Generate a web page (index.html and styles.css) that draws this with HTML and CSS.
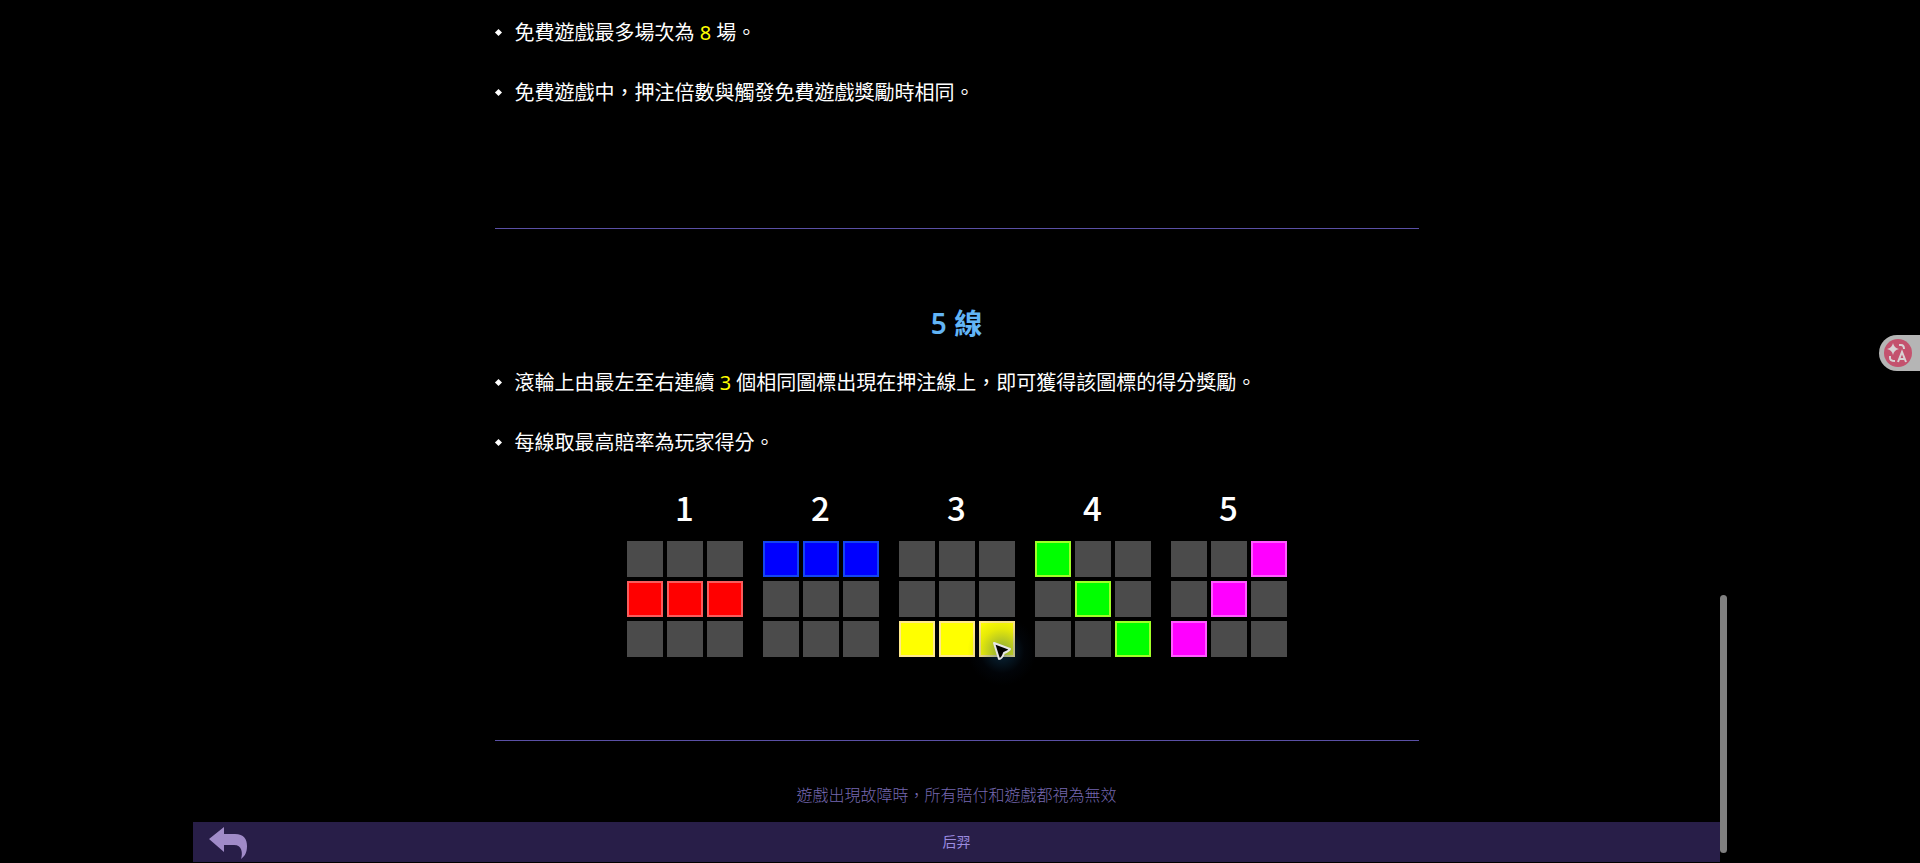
FILE: index.html
```html
<!DOCTYPE html>
<html lang="zh-TW">
<head>
  <meta charset="UTF-8">
  <title>后羿</title>
  <link rel="stylesheet" href="styles.css">
</head>
<body>

  <div class="game">
    <main class="help">
      <section>
        <ul class="rules">
          <li>免費遊戲最多場次為 <span class="num">8</span> 場。</li>
          <li>免費遊戲中，押注倍數與觸發免費遊戲獎勵時相同。</li>
        </ul>
      </section>

      <section class="lines-section">
        <h2>5 線</h2>
        <ul class="rules">
          <li>滾輪上由最左至右連續 <span class="num">3</span> 個相同圖標出現在押注線上，即可獲得該圖標的得分獎勵。</li>
          <li>每線取最高賠率為玩家得分。</li>
        </ul>
        <div class="lines" id="lines"></div>
      </section>

      <p class="notice">遊戲出現故障時，所有賠付和遊戲都視為無效</p>
    </main>

    <footer class="bar">
      <button class="back" aria-label="返回">
        <svg width="40" height="34" viewBox="0 0 40 34">
          <path d="M1 13 L16 1 V8 H27 C36 8 39 13 39 20 C39 26 37 30 33 33 C35 27 34 19 26 19 H16 V26 Z" fill="#a08bc8"/>
        </svg>
      </button>
      <span>后羿</span>
    </footer>

    <div class="scroll-thumb"></div>
  </div>

  <button class="translate" aria-label="翻譯">
    <svg width="28" height="28" viewBox="0 0 28 28">
      <circle cx="14" cy="14" r="14" fill="#c4526e"/>
      <path d="M9 4 Q10 9 15 10 Q10 11 9 16 Q8 11 3 10 Q8 9 9 4 Z" fill="#d8d3d5"/>
      <path d="M15 6 H17 Q20 6 20 10 M6 17 V19 Q6 22 11 22" fill="none" stroke="#d8d3d5" stroke-width="2"/>
      <path d="M14 23 L18 13 L22 23 M15 20 H21" fill="none" stroke="#d8d3d5" stroke-width="2"/>
    </svg>
  </button>

  <script>
    // cells are numbered 0-8, left to right, top to bottom
    const payLines = [
      { color: 'red', cells: [3, 4, 5] },
      { color: 'blue', cells: [0, 1, 2] },
      { color: 'yellow', cells: [6, 7, 8] },
      { color: 'green', cells: [0, 4, 8] },
      { color: 'pink', cells: [2, 4, 6] }
    ];
    const lines = document.getElementById('lines');

    payLines.forEach((line, index) => {
      const item = document.createElement('div');
      item.className = 'line';
      const title = document.createElement('h3');
      title.textContent = index + 1;
      item.appendChild(title);
      const grid = document.createElement('div');
      grid.className = 'grid';
      for (let i = 0; i < 9; i++) {
        const cell = document.createElement('div');
        cell.className = 'cell';
        if (line.cells.includes(i)) cell.classList.add(line.color);
        grid.appendChild(cell);
      }
      item.appendChild(grid);
      lines.appendChild(item);
    });

    // game cursor
    lines.children[2].insertAdjacentHTML('beforeend',
      `<div class="cursor"><svg width="20" height="21" viewBox="0 0 20 21">
        <path d="M2 2 L18 8 Q17 10 12 12 Q10 18 7 18 Z" fill="#000" stroke="#e6e6e6" stroke-width="2" stroke-linejoin="round"/>
      </svg></div>`);
  </script>

</body>
</html>
```

FILE: styles.css
```css
:root {
  --rule: #5a50a5;
  --bar: #281e48;
  --cell: #4b4b4b;
}

* {
  box-sizing: border-box;
}

body {
  margin: 0;
  background: #000;
  color: #fff;
  font-family: "Noto Sans", "Noto Sans CJK TC", sans-serif;
  font-size: 20px;
}

button {
  border: none;
  padding: 0;
  background: none;
  cursor: pointer;
}

.game {
  position: relative;
  display: flex;
  flex-direction: column;
  min-height: 100vh;
  margin: 0 200px 0 193px;
  padding-bottom: 1px;
}

.help {
  width: 100%;
  max-width: 924px;
  margin: 0 auto;
}

.help section {
  padding-top: 3px;
  padding-bottom: 105px;
  border-bottom: 1px solid var(--rule);
}

.help .lines-section {
  padding-top: 74px;
  padding-bottom: 83px;
}

h2 {
  margin: 0 0 10px;
  font-size: 28px;
  line-height: 40px;
  font-weight: 600;
  text-align: center;
  color: #62b5f6;
}

.rules {
  list-style: none;
  margin: 0;
  padding: 0;
}

.rules li {
  line-height: 60px;
}

.rules li::before {
  content: "";
  display: inline-block;
  width: 5px;
  height: 5px;
  margin: 0 14px 5px 1px;
  background: #fff;
  transform: rotate(45deg);
}

.num {
  color: #ff0;
}

.lines {
  display: flex;
  justify-content: center;
  gap: 20px;
  margin-top: 14px;
}

.line {
  position: relative;
}

.line h3 {
  margin: 0 0 14px;
  font-family: "Noto Sans CJK TC", sans-serif;
  font-size: 33px;
  line-height: 40px;
  font-weight: 500;
  text-align: center;
}

.grid {
  display: grid;
  grid-template-columns: repeat(3, 36px);
  grid-auto-rows: 36px;
  gap: 4px;
}

.cell {
  border: 2px solid var(--cell);
  background: var(--cell);
}

.red {
  background: #f00;
  border-color: #f85c5c;
}

.blue {
  background: #00f;
  border-color: #1446f0;
}

.yellow {
  background: #ff0;
  border-color: #ffe88c;
}

.green {
  background: #0f0;
  border-color: #a0ff28;
}

.pink {
  background: #f0f;
  border-color: #ff5cff;
}

.cursor {
  position: absolute;
  right: -22px;
  bottom: -29px;
  width: 70px;
  height: 70px;
  padding: 25px;
  background: radial-gradient(circle, rgba(20, 80, 120, 0.5), rgba(10, 40, 80, 0.1) 45%, rgba(10, 40, 80, 0) 70%);
}

.cursor svg {
  display: block;
}

.notice {
  margin: 42px 0 14px;
  font-size: 16px;
  line-height: 24px;
  font-weight: 300;
  text-align: center;
  color: #7568b0;
}

.bar {
  display: flex;
  align-items: center;
  justify-content: center;
  position: relative;
  height: 40px;
  margin-top: auto;
  padding-bottom: 2px;
  background: var(--bar);
  color: #9c8ce0;
  font-size: 14px;
}

.back {
  position: absolute;
  left: 15px;
  top: 4px;
}

.back svg {
  display: block;
}

.scroll-thumb {
  position: absolute;
  right: -7px;
  bottom: 10px;
  width: 7px;
  height: 258px;
  border-radius: 4px;
  background: #808080;
}

.translate {
  position: fixed;
  right: 0;
  top: 335px;
  width: 41px;
  height: 36px;
  padding-left: 5px;
  border-radius: 18px 0 0 18px;
  background: #b5b5b5;
}

.translate svg {
  display: block;
}
```
